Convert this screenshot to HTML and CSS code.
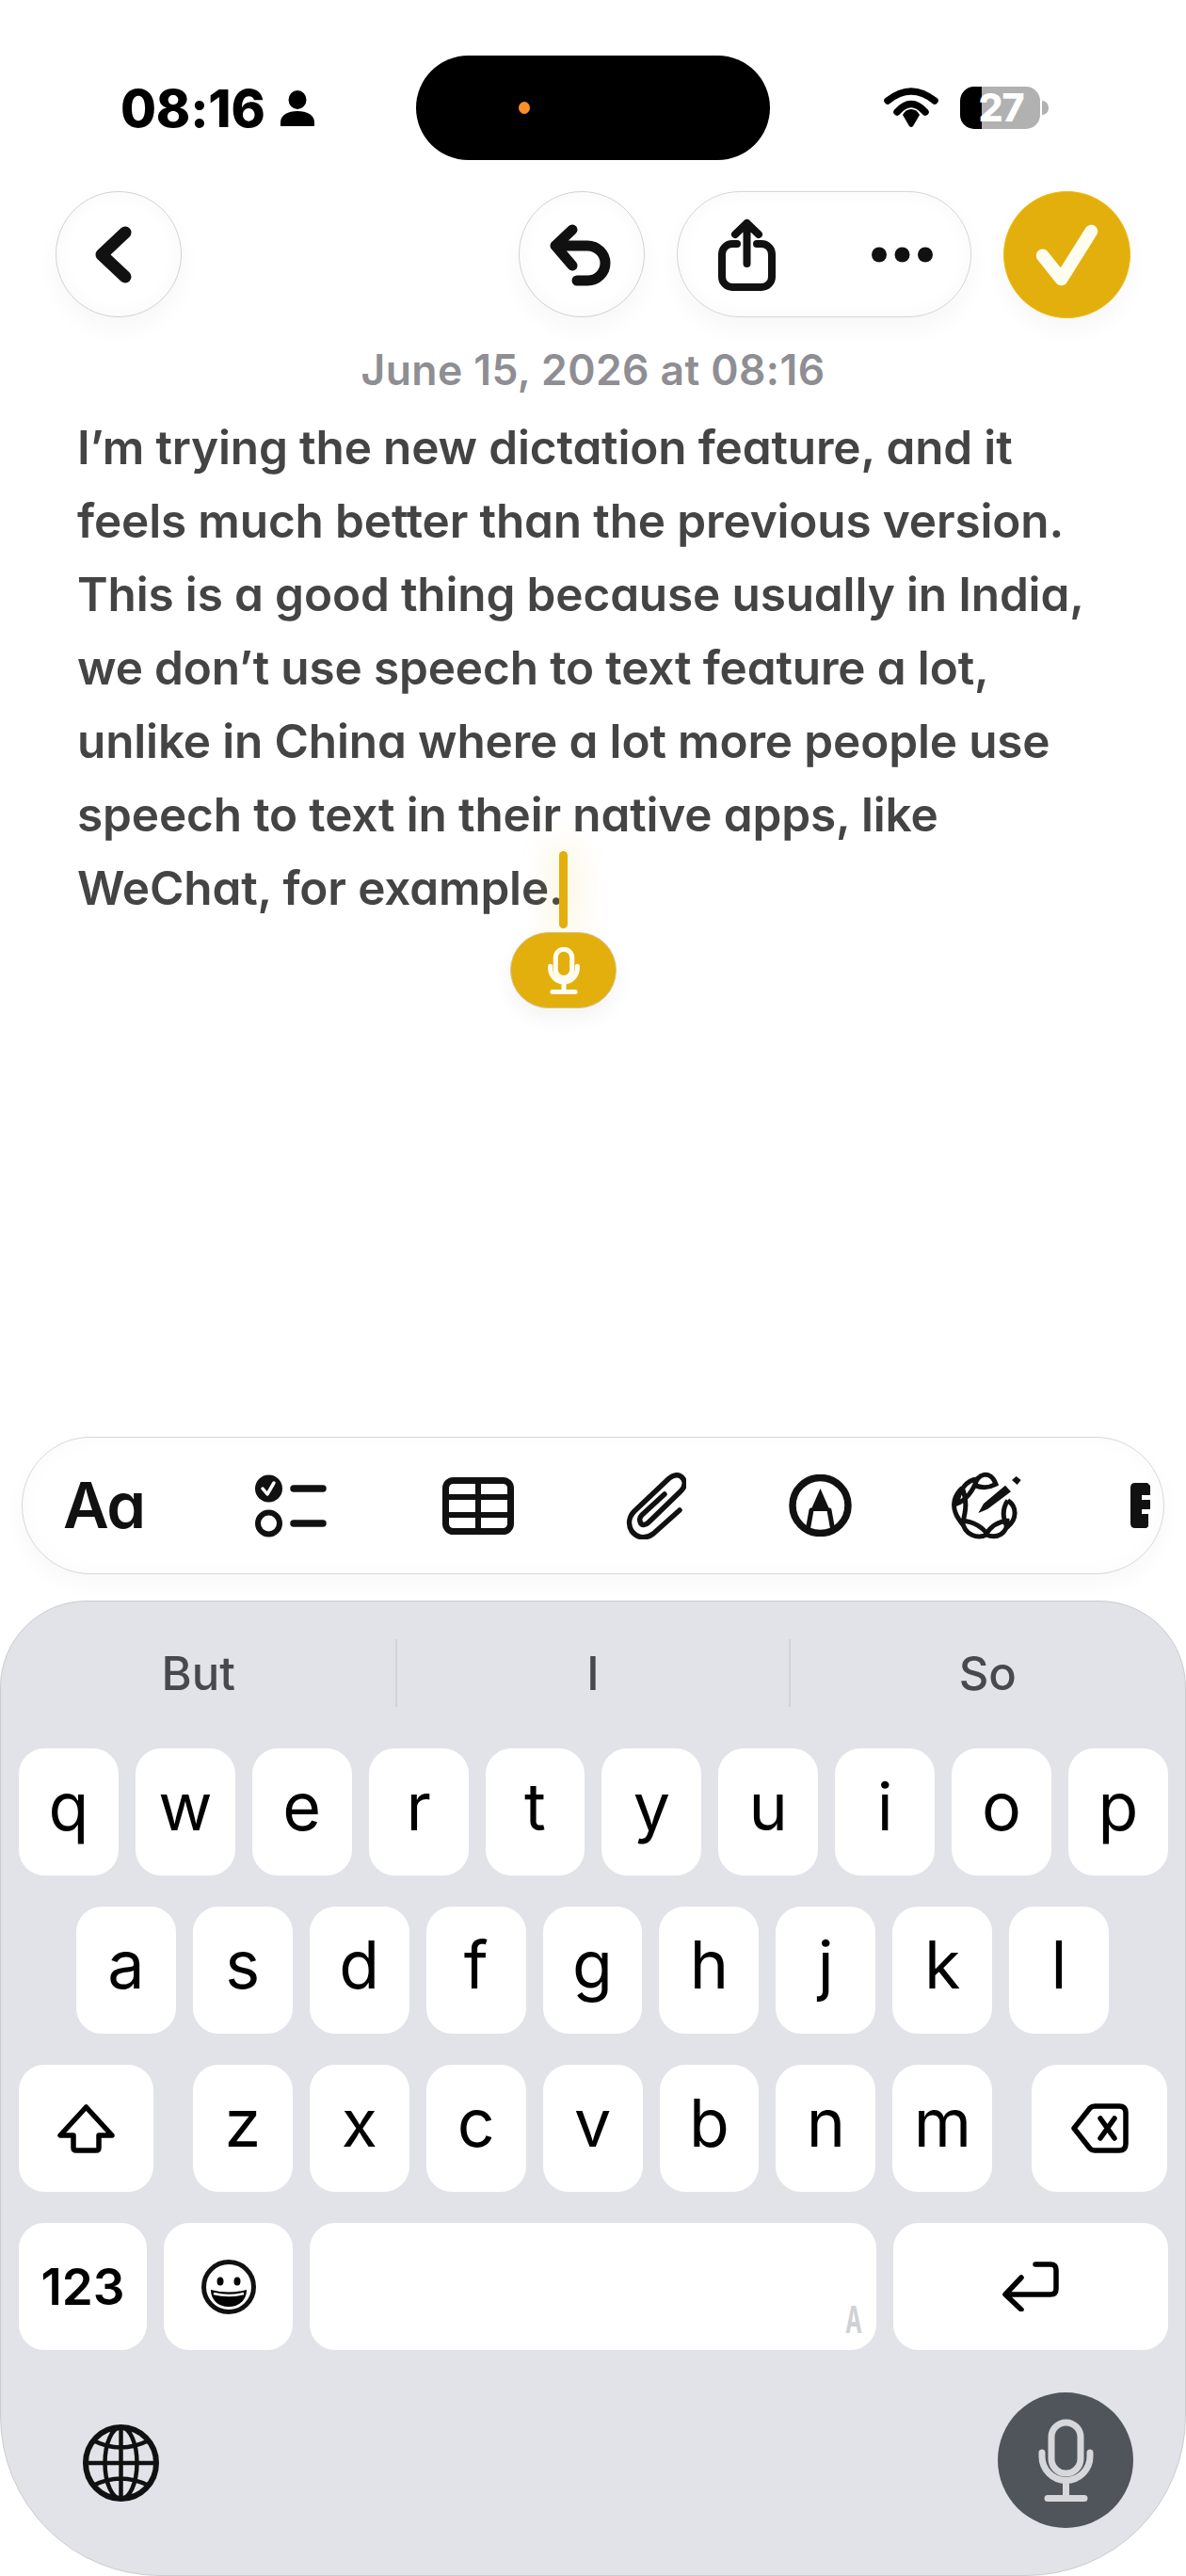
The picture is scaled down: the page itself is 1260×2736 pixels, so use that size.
FILE: index.html
```html
<!DOCTYPE html>
<html lang="en">
<head>
	<meta charset="UTF-8">
	<title>Notes</title>
	<link rel="stylesheet" href="styles.css">
</head>
<body>
<div class="screen">
	<!-- status bar -->
	<div class="status">
		<div class="status-left">
			<span class="time">08:16</span>
			<svg class="person" viewBox="0 0 36 38"><ellipse cx="18" cy="10" rx="9.5" ry="10"/><path d="M0 38V34C0 26 8 22 18 22S36 26 36 34V38Z"/></svg>
		</div>
		<div class="island"><span class="island-dot"></span></div>
		<div class="status-right">
			<svg class="wifi" viewBox="0 0 58 43"><path class="wifi-arc" d="M4 14Q29 -6 54 14"/><path class="wifi-arc" d="M14 26Q29 9 44 26"/><path d="M29 23C33 23 36 25 38 29L31 41Q29 43 27 41L20 29C22 25 25 23 29 23Z"/></svg>
			<div class="battery"><span>27</span></div>
			<span class="battery-nub"></span>
		</div>
	</div>

	<!-- top buttons -->
	<div class="nav">
		<div class="round-btn">
			<svg class="fill-btn" viewBox="0 0 134 134"><path class="ink" stroke-width="13" d="M74 44L49 67.500L74 91"/></svg>
		</div>
		<div class="nav-right">
			<div class="round-btn">
				<svg class="fill-btn" viewBox="0 0 134 134"><path class="ink" stroke-width="11" d="M57 41L39 58L57 79M39 58H73A19 18.500 0 0 1 73 95H62"/></svg>
			</div>
			<div class="pill-btn">
				<svg class="share" viewBox="0 0 61 77"><path class="ink" stroke-width="8" d="M20 27H15A11 11 0 0 0 4 38V62A11 11 0 0 0 15 73H46A11 11 0 0 0 57 62V38A11 11 0 0 0 46 27H41M30.500 48V5M18 17L30.500 5L43 17"/></svg>
				<svg class="dots" viewBox="0 0 65 19"><ellipse cx="8" cy="9.500" rx="8" ry="8"/><ellipse cx="32.500" cy="9.500" rx="8" ry="8"/><ellipse cx="57" cy="9.500" rx="8" ry="8"/></svg>
			</div>
			<div class="done-btn">
				<svg class="fill-btn" viewBox="0 0 135 135"><path class="done-check" d="M42 69L62 94L94 43"/></svg>
			</div>
		</div>
	</div>

	<!-- note -->
	<div class="date">June 15, 2026 at 08:16</div>
	<div class="note">
		I’m trying the new dictation feature, and it<br>
		feels much better than the previous version.<br>
		This is a good thing because usually in India,<br>
		we don’t use speech to text feature a lot,<br>
		unlike in China where a lot more people use<br>
		speech to text in their native apps, like<br>
		WeChat, for example.
		<span class="cursor"></span>
		<div class="dictation">
			<svg class="mic-small" viewBox="0 0 61 89"><rect class="mic-line" x="15" y="4" width="31" height="54" rx="15.500"/><path class="mic-line" d="M5 36V40A25.500 25.500 0 0 0 56 40V36M30.500 66V84M9 84.500H52"/></svg>
		</div>
	</div>

	<!-- format toolbar -->
	<div class="toolbar">
		<span class="tool-text">Aa</span>
		<svg class="tool tool-list" viewBox="0 0 76 67"><circle cx="14.500" cy="15" r="14.500"/><path class="tool-tick" d="M8 15L13 21L20 9"/><circle class="ink" stroke-width="6" cx="14.500" cy="52" r="11.500"/><path class="ink" stroke-width="7.500" d="M41 15H72M41 52H72"/></svg>
		<svg class="tool tool-table" viewBox="0 0 76 61"><rect class="ink" stroke-width="7" x="3.500" y="3.500" width="69" height="54" rx="8"/><path class="ink tool-grid" stroke-width="6" d="M3 21H73M3 40H73M38 3V58"/></svg>
		<svg class="tool tool-clip" viewBox="0 0 64 71"><path class="ink" stroke-width="5.500" d="M57 40L29 65C21 71 12 70 6 62C2 55 3 47 9 41L46 6C52 1 58 2 61 7C64 12 62 16 58 20L24 53C20 57 16 56 15 52C14 49 15 47 17 45L41 23"/></svg>
		<svg class="tool tool-markup" viewBox="0 0 67 66"><ellipse class="ink" stroke-width="7.500" cx="33.500" cy="33" rx="29.500" ry="29.500"/><path d="M33.500 15L44 39H23Z"/><path class="ink" stroke-width="5" d="M24 38L20 60M43 38L47 60"/></svg>
		<svg class="tool tool-write" viewBox="85 45 231 222"><path class="knot" d="M165 92C170 55 215 40 232 88C210 100 185 100 165 92M172 72C140 75 115 105 108 150C135 140 160 110 172 72M125 100C92 130 88 170 125 215C138 170 140 140 125 100M125 205C130 250 175 265 205 248C190 225 160 207 125 205M200 248C215 225 240 207 268 205C270 245 235 265 200 248M270 140C300 160 300 200 268 225C253 195 253 165 270 140"/><path d="M176 180L193 150L262 92L280 112L205 168ZM283 75L297 63L312 75L300 90Z"/></svg>
		<svg class="tool tool-cut" viewBox="0 0 21 48"><path d="M5 0H18L21 3V13H12V18H21V28H12V33H19V46L17 48H5Q0 48 0 43V5Q0 0 5 0Z"/></svg>
	</div>

	<!-- keyboard -->
	<div class="keyboard">
		<div class="suggest">
			<div class="suggest-item">But</div>
			<div class="suggest-item suggest-mid">I</div>
			<div class="suggest-item">So</div>
		</div>
		<div class="keys">
			<div class="row">
				<div class="key">q</div><div class="key">w</div><div class="key">e</div><div class="key">r</div><div class="key">t</div><div class="key">y</div><div class="key">u</div><div class="key">i</div><div class="key">o</div><div class="key">p</div>
			</div>
			<div class="row row-home">
				<div class="key">a</div><div class="key">s</div><div class="key">d</div><div class="key">f</div><div class="key">g</div><div class="key">h</div><div class="key">j</div><div class="key">k</div><div class="key">l</div>
			</div>
			<div class="row">
				<div class="key key-shift">
					<svg class="key-icon" viewBox="0 0 61 52"><path class="ink thin" d="M30.500 3L3 33H17V46Q17 49 20 49H41Q44 49 44 46V33H58Z"/></svg>
				</div>
				<div class="key">z</div><div class="key">x</div><div class="key">c</div><div class="key">v</div><div class="key">b</div><div class="key">n</div><div class="key">m</div>
				<div class="key key-back">
					<svg class="key-icon" viewBox="0 0 61 53"><path class="ink thin" d="M3 26.500L20 5Q22 3 25 3H51Q58 3 58 10V43Q58 50 51 50H25Q22 50 20 48ZM31 16L46 37M46 16L31 37"/></svg>
				</div>
			</div>
			<div class="row">
				<div class="key key-num">123</div>
				<div class="key key-emoji">
					<svg class="key-icon" viewBox="0 0 58 58"><circle class="ink" stroke-width="5" cx="29" cy="29" r="26.500"/><ellipse cx="20" cy="23" rx="3.500" ry="4.500"/><ellipse cx="38" cy="23" rx="3.500" ry="4.500"/><path d="M10 32Q29 37 48 32C48 43 40 50 29 50S10 43 10 32Z"/><path class="smile-band" d="M13 36Q29 40 45 36"/></svg>
				</div>
				<div class="key key-space"><span class="space-mark">A</span></div>
				<div class="key key-return">
					<svg class="key-icon" viewBox="0 0 60 53"><path class="ink thin" d="M35 3H51Q57 3 57 9V29Q57 35 51 35H3M20 17L3 35L20 51"/></svg>
				</div>
			</div>
		</div>
		<div class="kb-bottom">
			<svg class="globe" viewBox="0 0 81 82"><ellipse class="ink" stroke-width="6" cx="40.500" cy="41" rx="37.500" ry="38"/><ellipse class="ink" stroke-width="4.500" cx="40.500" cy="41" rx="17" ry="38"/><path class="ink" stroke-width="4.500" d="M40.500 3V79M3 41H78M11 17Q40 32 70 17M11 65Q40 50 70 65"/></svg>
			<div class="kb-mic">
				<svg class="mic-big" viewBox="0 0 61 89"><rect class="mic-line" x="15" y="4" width="31" height="54" rx="15.500"/><path class="mic-line" d="M5 36V40A25.500 25.500 0 0 0 56 40V36M30.500 66V84M11 84.500H50"/></svg>
			</div>
		</div>
	</div>
</div>
</body>
</html>
```

FILE: styles.css
```css
* {
	box-sizing: border-box;
}
body {
	margin: 0;
	background: #fff;
	font-family: Inter, "Noto Sans", sans-serif;
}
.screen {
	width: 1260px;
	height: 2736px;
	display: flex;
	flex-direction: column;
	overflow: hidden;
	background: #fff;
}
.ink {
	fill: none;
	stroke: #111;
	stroke-linecap: round;
	stroke-linejoin: round;
}
.thin {
	stroke: #000;
	stroke-width: 5.5;
}

/* status bar */
.status {
	display: flex;
	align-items: center;
	height: 111px;
	margin-top: 59px;
}
.status-left {
	display: flex;
	align-items: center;
	width: 442px;
	padding-left: 128px;
}
.time {
	font-size: 55px;
	font-weight: 800;
	letter-spacing: -0.2px;
	line-height: 60px;
	color: #000;
}
.person {
	width: 36px;
	height: 38px;
	margin-left: 16px;
}
.island {
	display: flex;
	align-items: center;
	width: 376px;
	height: 111px;
	padding-left: 109px;
	border-radius: 56px;
	background: #000;
}
.island-dot {
	width: 12px;
	height: 13px;
	border-radius: 50%;
	background: #fb8f2b;
}
.status-right {
	display: flex;
	align-items: center;
	padding-left: 121px;
}
.wifi {
	width: 58px;
	height: 43px;
}
.wifi-arc {
	fill: none;
	stroke: #000;
	stroke-width: 7.5;
	stroke-linecap: round;
}
.battery {
	display: flex;
	align-items: center;
	justify-content: center;
	width: 85px;
	height: 45px;
	margin-left: 23px;
	padding-left: 2px;
	border-radius: 15px;
	background: linear-gradient(90deg, #000 23px, #b1b1b1 23px);
}
.battery span {
	font-size: 41px;
	font-weight: 800;
	letter-spacing: -1px;
	line-height: 45px;
	color: #fff;
}
.battery-nub {
	width: 7px;
	height: 15px;
	margin-left: 2px;
	border-radius: 0 8px 8px 0;
	background: #b1b1b1;
}

/* top buttons */
.nav {
	display: flex;
	justify-content: space-between;
	height: 134px;
	margin-top: 33px;
	padding: 0 59px;
}
.nav-right {
	display: flex;
	gap: 34px;
}
.round-btn {
	width: 134px;
	height: 134px;
	border: 1px solid #d2d2d2;
	border-radius: 50%;
	background: #fff;
	box-shadow: 0 12px 26px rgba(0, 0, 0, 0.035), inset 0 0 22px rgba(0, 0, 0, 0.03);
	position: relative;
}
.fill-btn {
	display: block;
	position: absolute;
	left: -1px;
	top: -1px;
	width: 134px;
	height: 134px;
}
.pill-btn {
	display: flex;
	align-items: center;
	justify-content: space-between;
	width: 313px;
	height: 134px;
	padding: 0 40px 0 43px;
	border: 1px solid #d6d6d6;
	border-radius: 67px;
	background: #fff;
	box-shadow: 0 12px 26px rgba(0, 0, 0, 0.035), inset 0 0 22px rgba(0, 0, 0, 0.03);
}
.share {
	width: 61px;
	height: 77px;
}
.dots {
	width: 65px;
	height: 19px;
	fill: #111;
}
.done-btn {
	width: 135px;
	height: 135px;
	border: 1px solid #f0bb0f;
	border-radius: 50%;
	background: #e3af0d;
	box-shadow: 0 12px 26px rgba(0, 0, 0, 0.035);
	position: relative;
}
.done-check {
	fill: none;
	stroke: #fffdf0;
	stroke-width: 14;
	stroke-linecap: round;
	stroke-linejoin: round;
}

/* note */
.date {
	margin-top: 31px;
	font-size: 44.500px;
	font-weight: 600;
	line-height: 50px;
	letter-spacing: 0.4px;
	text-align: center;
	color: #8e8e93;
}
.note {
	position: relative;
	margin-top: 18px;
	padding-left: 82px;
	font-size: 49.500px;
	font-weight: 570;
	line-height: 78px;
	letter-spacing: -0.15px;
	color: #444;
	font-feature-settings: "cv11";
}
.cursor {
	position: absolute;
	left: 594px;
	top: 468px;
	width: 9px;
	height: 82px;
	border-radius: 5px;
	background: #e3af0d;
	box-shadow: 0 0 34px 10px rgba(227, 175, 13, 0.14);
}
.dictation {
	position: absolute;
	left: 542px;
	top: 554px;
	display: flex;
	align-items: center;
	justify-content: center;
	width: 113px;
	height: 81px;
	border: 1px solid #d5c48b;
	border-radius: 41px;
	background: #e3af0d;
	box-shadow: 0 10px 22px rgba(0, 0, 0, 0.05);
}
.mic-small {
	width: 38px;
	height: 50px;
}
.mic-small .mic-line {
	stroke: #fffdf0;
	stroke-width: 9;
}
.mic-line {
	fill: none;
	stroke: #d6d7db;
	stroke-width: 7;
	stroke-linecap: round;
}

/* format toolbar */
.toolbar {
	display: flex;
	align-items: center;
	height: 146px;
	margin: auto 23px 0;
	padding-left: 43px;
	border: 1px solid #d8d8d8;
	border-radius: 73px;
	background: #fff;
	box-shadow: 0 10px 24px rgba(0, 0, 0, 0.03), inset 0 0 24px rgba(0, 0, 0, 0.025);
}
.tool-text {
	width: 86px;
	font-size: 67px;
	font-weight: 600;
	line-height: 70px;
	letter-spacing: -1.5px;
	color: #111;
	font-feature-settings: "cv11";
}
.tool {
	fill: #111;
	flex: none;
}
.tool-tick {
	fill: none;
	stroke: #fff;
	stroke-width: 3.5;
	stroke-linecap: round;
	stroke-linejoin: round;
}
.tool-grid {
	stroke-linecap: butt;
}
.tool-list {
	width: 76px;
	height: 67px;
	margin-left: 118px;
}
.tool-table {
	width: 76px;
	height: 61px;
	margin-left: 123px;
}
.tool-clip {
	width: 64px;
	height: 71px;
	margin-left: 119px;
}
.tool-markup {
	width: 67px;
	height: 66px;
	margin-left: 109px;
}
.tool-write {
	width: 77px;
	height: 74px;
	margin-left: 104px;
}
.knot {
	fill: none;
	stroke: #111;
	stroke-width: 15;
}
.tool-cut {
	width: 21px;
	height: 48px;
	margin-left: 115px;
}

/* keyboard */
.keyboard {
	height: 1036px;
	margin-top: 28px;
	padding-top: 40px;
	border: 1px solid #cbccd0;
	border-radius: 92px 92px 170px 170px;
	background: #e1e3e8;
}
.suggest {
	display: flex;
	height: 72px;
}
.suggest-item {
	display: flex;
	align-items: center;
	justify-content: center;
	width: 420px;
	font-size: 49px;
	font-weight: 500;
	color: #48494e;
}
.suggest-mid {
	border-left: 2px solid #d2d3d8;
	border-right: 2px solid #d2d3d8;
}
.keys {
	display: flex;
	flex-direction: column;
	gap: 33px;
	margin-top: 44px;
	padding: 0 18px 0 19px;
}
.row {
	display: flex;
	gap: 18px;
	height: 135px;
}
.row-home {
	justify-content: center;
	padding-right: 2px;
}
.key {
	display: flex;
	align-items: center;
	justify-content: center;
	flex: none;
	width: 105.900px;
	padding-bottom: 12px;
	border-radius: 27px;
	background: #fff;
	font-size: 70px;
	font-weight: 420;
	line-height: 80px;
	color: #000;
}
.key-icon {
	display: block;
}
.key-shift {
	width: 143px;
	margin-right: 24px;
	padding-bottom: 0;
}
.key-shift .key-icon {
	width: 61px;
	height: 52px;
}
.key-back {
	width: 144px;
	margin-left: 24px;
	padding-bottom: 0;
}
.key-back .key-icon {
	width: 61px;
	height: 53px;
}
.key-num {
	width: 136px;
	padding-bottom: 0;
	font-size: 53px;
	font-weight: 600;
}
.key-emoji {
	width: 137px;
	padding-bottom: 0;
}
.key-emoji .key-icon {
	width: 58px;
	height: 58px;
}
.smile-band {
	fill: none;
	stroke: #fff;
	stroke-width: 2.5;
}
.key-space {
	flex: 1;
	position: relative;
}
.space-mark {
	position: absolute;
	right: 15px;
	bottom: 12px;
	font-size: 40px;
	font-weight: 700;
	line-height: 40px;
	color: #d0d1d4;
	transform: scaleX(0.6);
	transform-origin: right;
}
.key-return {
	width: 292px;
	padding-bottom: 0;
}
.key-return .key-icon {
	width: 60px;
	height: 53px;
}
.kb-bottom {
	display: flex;
	align-items: center;
	justify-content: space-between;
	margin-top: 45px;
	padding: 0 55px 0 87px;
}
.globe {
	width: 81px;
	height: 82px;
	margin-top: 6px;
}
.kb-mic {
	display: flex;
	align-items: center;
	justify-content: center;
	width: 144px;
	height: 144px;
	border-radius: 50%;
	background: #50555b;
}
.mic-big {
	width: 61px;
	height: 89px;
}
```
